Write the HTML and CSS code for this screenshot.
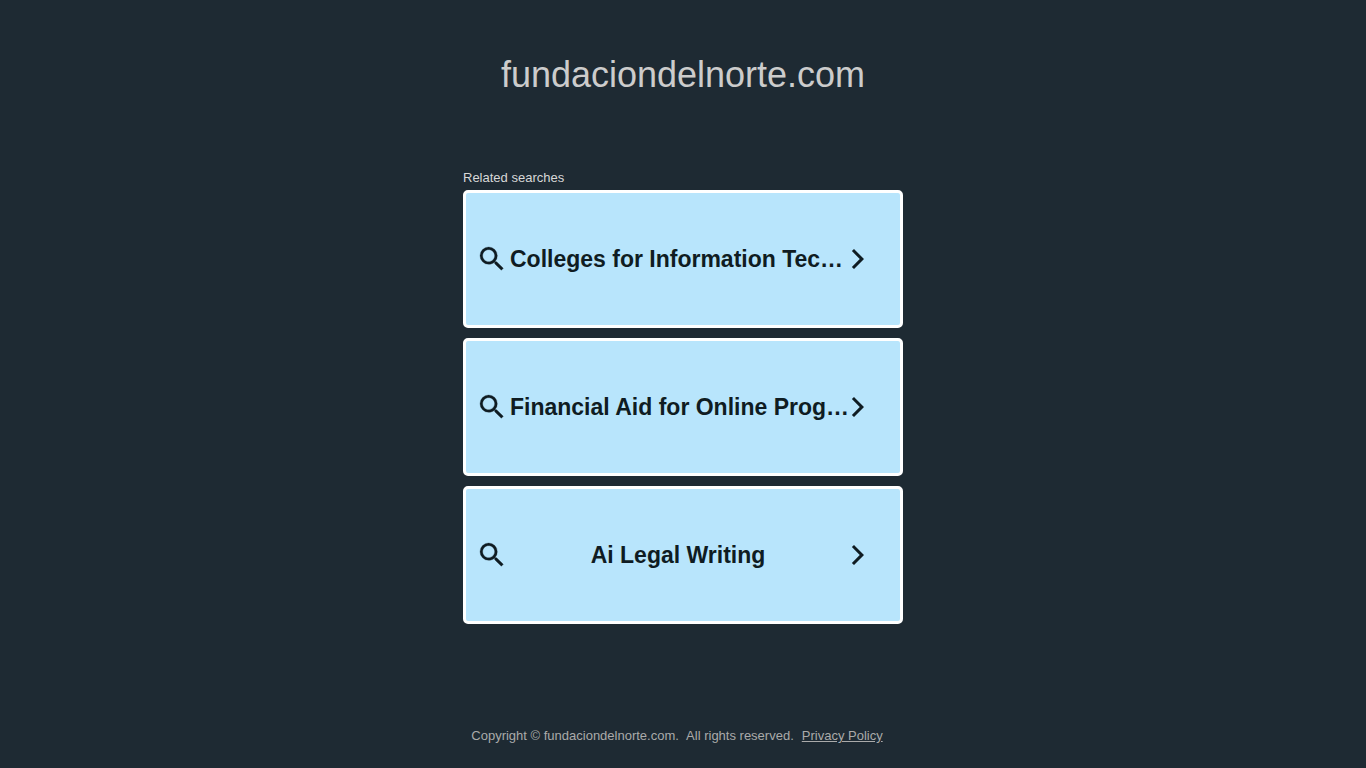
FILE: index.html
```
<!DOCTYPE html>
<html lang="en">
<head>
  <meta charset="UTF-8" />
  <meta name="viewport" content="width=device-width, initial-scale=1" />
  <title>fundaciondelnorte.com</title>
  <link rel="stylesheet" href="styles.css">
</head>
<body>

  <header class="header">
    <h1>fundaciondelnorte.com</h1>
  </header>

  <main class="searches">
    <h2>Related searches</h2>

    <a class="card" href="#">
      <svg class="search-icon" viewBox="0 0 24 24" aria-hidden="true"><path d="M15.5 14h-.79l-.28-.27A6.471 6.471 0 0 0 16 9.5 6.5 6.5 0 1 0 9.5 16c1.61 0 3.09-.59 4.23-1.57l.27.28v.79l5 4.99L20.49 19l-4.99-5zm-6 0C7.01 14 5 11.99 5 9.5S7.01 5 9.5 5 14 7.01 14 9.5 11.99 14 9.5 14z"/></svg>
      <span class="card-title long">Colleges for Information Tec…</span>
      <svg class="arrow-icon" viewBox="0 0 24 24" aria-hidden="true"><path d="M5.88 4.12 13.76 12l-7.88 7.88L8 22l10-10L8 2z"/></svg>
    </a>

    <a class="card" href="#">
      <svg class="search-icon" viewBox="0 0 24 24" aria-hidden="true"><path d="M15.5 14h-.79l-.28-.27A6.471 6.471 0 0 0 16 9.5 6.5 6.5 0 1 0 9.5 16c1.61 0 3.09-.59 4.23-1.57l.27.28v.79l5 4.99L20.49 19l-4.99-5zm-6 0C7.01 14 5 11.99 5 9.5S7.01 5 9.5 5 14 7.01 14 9.5 11.99 14 9.5 14z"/></svg>
      <span class="card-title long">Financial Aid for Online Prog…</span>
      <svg class="arrow-icon" viewBox="0 0 24 24" aria-hidden="true"><path d="M5.88 4.12 13.76 12l-7.88 7.88L8 22l10-10L8 2z"/></svg>
    </a>

    <a class="card" href="#">
      <svg class="search-icon" viewBox="0 0 24 24" aria-hidden="true"><path d="M15.5 14h-.79l-.28-.27A6.471 6.471 0 0 0 16 9.5 6.5 6.5 0 1 0 9.5 16c1.61 0 3.09-.59 4.23-1.57l.27.28v.79l5 4.99L20.49 19l-4.99-5zm-6 0C7.01 14 5 11.99 5 9.5S7.01 5 9.5 5 14 7.01 14 9.5 11.99 14 9.5 14z"/></svg>
      <span class="card-title">Ai Legal Writing</span>
      <svg class="arrow-icon" viewBox="0 0 24 24" aria-hidden="true"><path d="M5.88 4.12 13.76 12l-7.88 7.88L8 22l10-10L8 2z"/></svg>
    </a>
  </main>

  <footer class="footer">
    <span>Copyright © fundaciondelnorte.com. &nbsp;All rights reserved.</span>
    <a href="#">Privacy Policy</a>
  </footer>

</body>
</html>
```

FILE: styles.css
```
* {
  box-sizing: border-box;
}

body {
  background-color: #1e2a33;
  font-family: "Liberation Sans", Arial, Helvetica, sans-serif;
  display: flex;
  flex-direction: column;
  align-items: center;
  min-height: 100vh;
  margin: 0;
}

/* Domain name */
.header {
  padding: 53px 16px 72px;
}

h1 {
  margin: 0;
  color: #ccc;
  font-size: 36px;
  font-weight: 400;
  line-height: 44px;
}

/* Related searches */
.searches {
  display: flex;
  flex-direction: column;
  gap: 10px;
  width: 100%;
  max-width: 440px;
}

h2 {
  margin: 0 0 -7px;
  color: #d8d8d8;
  font-size: 13px;
  font-weight: 400;
  line-height: 18px;
}

.card {
  display: flex;
  align-items: center;
  padding: 50px 30px 50px 10px;
  background-color: #b8e5fc;
  border: 3px solid #fff;
  border-radius: 5px;
  color: #0f1c22;
  text-decoration: none;
}

.card:hover {
  background-color: #d0eefd;
}

.card-title {
  flex: 1;
  min-width: 0;
  font-size: 23px;
  font-weight: 700;
  line-height: 28px;
  text-align: center;
  white-space: nowrap;
}

.card-title.long {
  text-align: left;
}

.search-icon {
  flex: none;
  width: 32px;
  height: 32px;
  margin-right: 2px;
  fill: currentColor;
  stroke: currentColor;
  stroke-width: 0.2;
}

.arrow-icon {
  flex: none;
  width: 24px;
  height: 24px;
  fill: currentColor;
}

/* Footer */
.footer {
  display: flex;
  gap: 8px;
  margin-top: auto;
  padding: 16px 12px 24px 0;
  color: #aaa;
  font-size: 13px;
  line-height: 16px;
}

.footer a {
  color: #aaa;
}
```
